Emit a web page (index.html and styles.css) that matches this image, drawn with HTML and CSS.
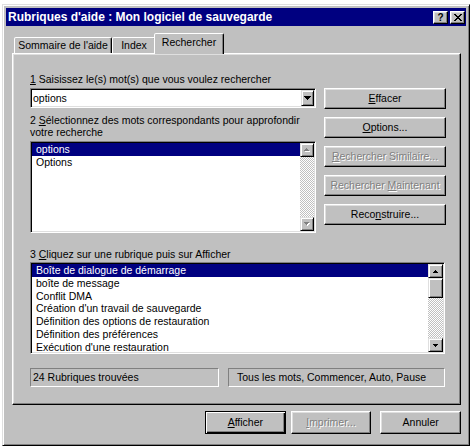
FILE: index.html
```html
<!DOCTYPE html>
<html lang="fr">
<head>
<meta charset="utf-8">
<title>Rubriques d'aide</title>
<link rel="stylesheet" href="styles.css">
</head>
<body>
<div class="window">
  <div class="titlebar">
    <span class="title">Rubriques d'aide : Mon logiciel de sauvegarde</span>
    <div class="caption-btns">
      <span class="caption-btn help">?</span>
      <span class="caption-btn close">
        <svg width="8" height="7" viewBox="0 0 8 7" shape-rendering="crispEdges"><path d="M0 0h2v1h1v1h2V1h1V0h2v1H7v1H6v1H5v1h1v1h1v1h1v1H6V6H5V5H3v1H2v1H0V6h1V5h1V4h1V3H2V2H1V1H0z" fill="#000"/></svg>
      </span>
    </div>
  </div>

  <div class="client">
    <div class="tabs">
      <div class="tab tab-contents">Sommaire de l'aide</div>
      <div class="tab tab-index">Index</div>
      <div class="tab tab-search active">Rechercher</div>
    </div>

    <div class="panel">
      <div class="label"><span class="u">1</span> Saisissez le(s) mot(s) que vous voulez rechercher</div>

      <div class="search">
        <div class="search-left">
          <div class="combo">
            <span class="combo-text">options</span>
            <span class="combo-btn">
              <svg width="7" height="4" viewBox="0 0 7 4" shape-rendering="crispEdges"><path d="M0 0h7v1H0zM1 1h5v1H1zM2 2h3v1H2zM3 3h1v1H3z" fill="#000"/></svg>
            </span>
          </div>

          <div class="label label-words">2 <span class="u">S</span>électionnez des mots correspondants pour approfondir<br>votre recherche</div>

          <div class="list list-words">
            <div class="items">
              <div class="item sel">options</div>
              <div class="item">Options</div>
            </div>
            <div class="scrollbar">
              <span class="arrow">
                <svg width="6" height="4" viewBox="0 0 6 4" shape-rendering="crispEdges"><path d="M3 1h1v1H3zM2 2h3v1H2zM1 3h5v1H1z" fill="#fff"/><path d="M2 0h1v1H2zM1 1h3v1H1zM0 2h5v1H0z" fill="#808080"/></svg>
              </span>
              <span class="track"></span>
              <span class="arrow">
                <svg width="6" height="4" viewBox="0 0 6 4" shape-rendering="crispEdges"><path d="M1 1h5v1H1zM2 2h3v1H2zM3 3h1v1H3z" fill="#fff"/><path d="M0 0h5v1H0zM1 1h3v1H1zM2 2h1v1H2z" fill="#808080"/></svg>
              </span>
            </div>
          </div>
        </div>

        <div class="search-right">
          <div class="btn"><span class="u">E</span>ffacer</div>
          <div class="btn"><span class="u">O</span>ptions...</div>
          <div class="btn disabled"><span class="u">R</span>echercher Similaire...</div>
          <div class="btn disabled">Rechercher <span class="u">M</span>aintenant</div>
          <div class="btn">Reco<span class="u">n</span>struire...</div>
        </div>
      </div>

      <div class="label label-topics">3 <span class="u">C</span>liquez sur une rubrique puis sur Afficher</div>

      <div class="list list-topics">
        <div class="items">
          <div class="item sel">Boîte de dialogue de démarrage</div>
          <div class="item">boîte de message</div>
          <div class="item">Conflit DMA</div>
          <div class="item">Création d'un travail de sauvegarde</div>
          <div class="item">Définition des options de restauration</div>
          <div class="item">Définition des préférences</div>
          <div class="item">Exécution d'une restauration</div>
        </div>
        <div class="scrollbar scrollbar-wide">
          <span class="arrow">
            <svg width="5" height="3" viewBox="0 0 5 3" shape-rendering="crispEdges"><path d="M2 0h1v1H2zM1 1h3v1H1zM0 2h5v1H0z" fill="#000"/></svg>
          </span>
          <span class="thumb"></span>
          <span class="track"></span>
          <span class="arrow">
            <svg width="5" height="3" viewBox="0 0 5 3" shape-rendering="crispEdges"><path d="M0 0h5v1H0zM1 1h3v1H1zM2 2h1v1H2z" fill="#000"/></svg>
          </span>
        </div>
      </div>

      <div class="statusbar">
        <div class="status status-count">24 Rubriques trouvées</div>
        <div class="status status-options">Tous les mots, Commencer, Auto, Pause</div>
      </div>
    </div>

    <div class="actions">
      <div class="btn btn-action default"><span class="u">A</span>fficher</div>
      <div class="btn btn-action disabled"><span class="u">I</span>mprimer...</div>
      <div class="btn btn-action btn-cancel">Annuler</div>
    </div>
  </div>
</div>
</body>
</html>
```

FILE: styles.css
```css
* {
  box-sizing: border-box;
}

body {
  margin: 0;
  background: #fff;
  font-family: "Liberation Sans", Arial, sans-serif;
  font-size: 10.5px;
  color: #000;
}

.u {
  text-decoration: underline;
}

/* ---------- window frame ---------- */
.window {
  margin: 4px 0 0 2px;
  width: 468px;
  height: 442px;
  padding: 3px;
  background: #c0c0c0;
  border: 1px solid;
  border-color: #dfdfdf #000 #000 #dfdfdf;
  box-shadow: inset 1px 1px #fff, inset -1px -1px #808080;
  display: flex;
  flex-direction: column;
}

.titlebar {
  height: 18px;
  background: #000080;
  color: #fff;
  display: flex;
  align-items: center;
  padding: 0 1px 0 2px;
}

.title {
  flex: 1;
  font-weight: bold;
  font-size: 12px;
  white-space: nowrap;
}

.caption-btns {
  display: flex;
  gap: 2px;
}

.caption-btn {
  width: 15px;
  height: 13px;
  background: #c0c0c0;
  border: 1px solid;
  border-color: #fff #000 #000 #fff;
  box-shadow: inset -1px -1px #808080, inset 1px 1px #dfdfdf;
  display: flex;
  align-items: center;
  justify-content: center;
  color: #000;
}

.caption-btn.help {
  font-weight: bold;
  font-size: 10px;
  line-height: 11px;
}

/* ---------- client area ---------- */
.client {
  padding: 7px 5px 0 6px;
}

.tabs {
  display: flex;
  align-items: flex-end;
  height: 20px;
  padding-left: 2px;
}

.tab {
  height: 16px;
  line-height: 15px;
  text-align: center;
  white-space: nowrap;
  background: #c0c0c0;
  border: 1px solid;
  border-bottom: 0;
  border-color: #fff #000 transparent #fff;
  border-radius: 2px 2px 0 0;
  box-shadow: inset -1px 0 #808080;
}

.tab-contents {
  width: 98px;
}

.tab-index {
  width: 44px;
}

.tab-search {
  width: 66px;
}

.tab.active {
  position: relative;
  z-index: 1;
  width: 70px;
  height: 21px;
  margin: 0 -2px -1px -2px;
  line-height: 17px;
}

.panel {
  background: #c0c0c0;
  border: 1px solid;
  border-color: #fff #000 #000 #fff;
  box-shadow: inset -1px -1px #808080, inset 1px 1px #dfdfdf;
  padding: 19px 14px 17px 17px;
}

.label {
  line-height: 13px;
  white-space: nowrap;
}

.label-words {
  margin-top: 6px;
  line-height: 12px;
}

.label-topics {
  margin-top: 15px;
}

.search {
  display: grid;
  grid-template-columns: 286px 122px;
  column-gap: 8px;
  margin-top: 2px;
  align-items: start;
}

.search-left {
  display: flex;
  flex-direction: column;
}

.search-right {
  display: flex;
  flex-direction: column;
  gap: 8px;
}

/* ---------- sunken fields ---------- */
.combo,
.list {
  background: #fff;
  border: 1px solid;
  border-color: #808080 #fff #fff #808080;
  box-shadow: inset 1px 1px #000, inset -1px -1px #dfdfdf;
  padding: 1px;
  display: flex;
}

.combo {
  height: 20px;
}

.combo-text {
  flex: 1;
  line-height: 16px;
  padding-left: 1px;
}

.combo-btn {
  width: 13px;
  height: 16px;
  background: #c0c0c0;
  border: 1px solid;
  border-color: #dfdfdf #000 #000 #dfdfdf;
  box-shadow: inset 1px 1px #fff, inset -1px -1px #808080;
  display: flex;
  align-items: center;
  justify-content: center;
}

.list-words {
  margin-top: 3px;
  height: 92px;
}

.list-topics {
  margin-top: 1px;
  width: 415px;
  height: 92px;
}

.items {
  flex: 1;
  overflow: hidden;
}

.item {
  line-height: 13px;
  height: 12.75px;
  padding-left: 4px;
  white-space: nowrap;
}

.list-words .item {
  height: 13px;
}

.item.sel {
  background: #000080;
  color: #fff;
}

/* ---------- scrollbars ---------- */
.scrollbar {
  width: 14px;
  display: flex;
  flex-direction: column;
}

.scrollbar-wide {
  width: 15px;
}

.arrow,
.thumb {
  background: #c0c0c0;
  border: 1px solid;
  border-color: #dfdfdf #000 #000 #dfdfdf;
  box-shadow: inset 1px 1px #fff, inset -1px -1px #808080;
  display: flex;
  align-items: center;
  justify-content: center;
}

.arrow {
  height: 14px;
}

.thumb {
  height: 20px;
}

.track {
  flex: 1;
  background: repeating-conic-gradient(#c0c0c0 0 25%, #fff 0 50%) 0 0 / 2px 2px;
}

/* ---------- buttons ---------- */
.btn {
  height: 21px;
  line-height: 19px;
  text-align: center;
  white-space: nowrap;
  background: #c0c0c0;
  border: 1px solid;
  border-color: #fff #000 #000 #fff;
  box-shadow: inset -1px -1px #808080, inset 1px 1px #dfdfdf;
}

.btn.disabled {
  color: #808080;
  text-shadow: 1px 1px 0 #fff;
}

.btn.default {
  border-color: #000;
  box-shadow: inset 1px 1px #fff, inset -1px -1px #000, inset -2px -2px #808080;
}

/* ---------- status ---------- */
.statusbar {
  display: flex;
  gap: 9px;
  margin-top: 14px;
}

.status {
  height: 19px;
  line-height: 17px;
  border: 1px solid;
  border-color: #808080 #fff #fff #808080;
  white-space: nowrap;
}

.status-count {
  width: 189px;
  padding-left: 2px;
}

.status-options {
  width: 217px;
  padding-left: 8px;
}

/* ---------- dialog actions ---------- */
.actions {
  display: flex;
  gap: 5px;
  margin-top: 6px;
  padding-left: 193px;
}

.btn-action {
  width: 81px;
  height: 23px;
  line-height: 21px;
}

.btn-cancel {
  margin-left: 4px;
}
```
